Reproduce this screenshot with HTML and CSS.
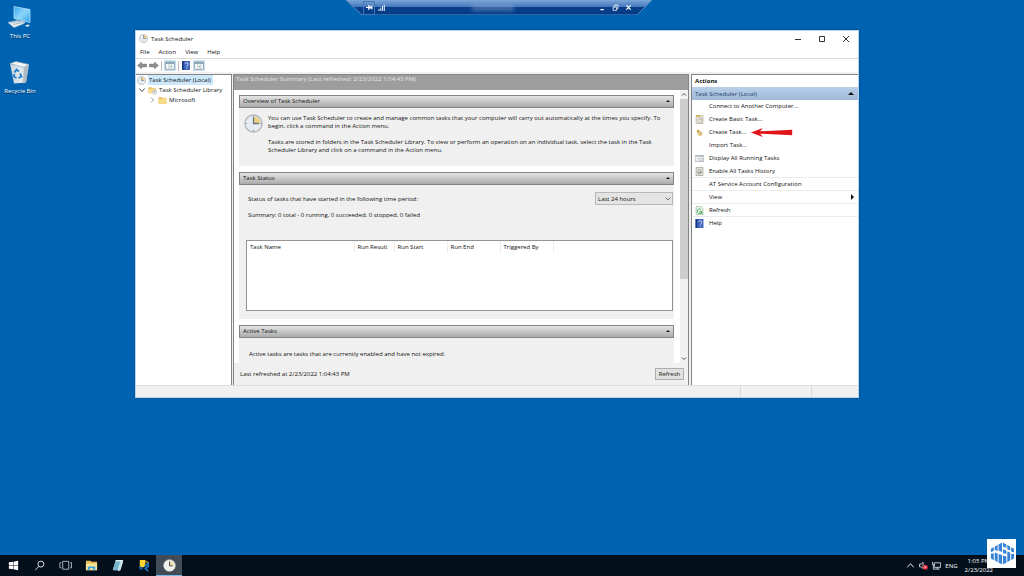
FILE: index.html
```html
<!DOCTYPE html>
<html lang="en">
<head>
<meta charset="utf-8">
<title>Task Scheduler</title>
<link rel="stylesheet" href="styles.css">
</head>
<body>
<svg class="defs" aria-hidden="true">
  <defs>
    <linearGradient id="screen" x1="0" y1="0" x2="1" y2="1"><stop offset="0" stop-color="#37a5ec"/><stop offset=".5" stop-color="#8dd7fb"/><stop offset="1" stop-color="#2f9fe8"/></linearGradient>
    <linearGradient id="bin" x1="0" y1="0" x2="1" y2="0"><stop offset="0" stop-color="#c7d3dc"/><stop offset=".6" stop-color="#e6edf2"/><stop offset="1" stop-color="#9fb0bd"/></linearGradient>
    <linearGradient id="rdp" x1="0" y1="0" x2="0" y2="1"><stop offset="0" stop-color="#7ba6d8"/><stop offset=".45" stop-color="#4678ba"/><stop offset=".5" stop-color="#083f8c"/><stop offset="1" stop-color="#053a84"/></linearGradient>
    <symbol id="clock" viewBox="0 0 20 20">
      <circle cx="10" cy="10" r="9" fill="#e6ecf4" stroke="#b3b7bb" stroke-width="1.500"/>
      <path d="M10 10V2.600A7.400 7.400 0 0 1 17.400 10z" fill="#ecd083"/>
      <path d="M10 3.500V10H15.500" fill="none" stroke="#6d7480" stroke-width="1.400"/>
      <path d="M10 1.800v1.500M10 16.700v1.500M1.800 10h1.500M16.700 10h1.500" stroke="#7f93ad" stroke-width="1"/>
    </symbol>
    <symbol id="taskclock" viewBox="0 0 20 20">
      <circle cx="10" cy="10" r="9" fill="#f1f1ef" stroke="#c8c8c8"/>
      <path d="M10 10V2.600A7.400 7.400 0 0 1 17.400 10z" fill="#f0dfb4"/>
      <path d="M10 4V10.500H15" fill="none" stroke="#444" stroke-width="1.500"/>
    </symbol>
    <symbol id="folder" viewBox="0 0 16 14"><path d="M1 1h6l1.500 2H15v10H1z" fill="#e3b94e"/><path d="M2.500 4H15v9H1z" fill="#f8dc8a"/></symbol>
    <symbol id="help" viewBox="0 0 14 16"><path d="M0 0h14v16H0z" fill="#3f63bb"/><path d="M0 0h3v16H0z" fill="#183a85"/><path d="M5.800 5.500C5.800 2 11.500 2.300 11 5.800C10.700 7.600 8.500 7.500 8.500 10M8.500 11.800v1.800" stroke="#e8efff" stroke-width="1.600" fill="none"/></symbol>
    <symbol id="pane" viewBox="0 0 18 16"><path d="M1 2h16v13H1z" fill="#f7f9fa" stroke="#7d8f9d" stroke-width="1.300"/><path d="M1 2h16v3H1z" fill="#8199aa"/><path d="M7 5v10M12 5v10" stroke="#a3afb7"/><path d="M10.500 8v4L8.500 10z" fill="#3fa055"/></symbol>
    <symbol id="arrow" viewBox="0 0 18 14"><path d="M1 7 8 1v3.500h9v5H8V13z" fill="#929292" stroke="#6b6b6b" stroke-width="1"/></symbol>
  </defs>
</svg>

<div class="desktop">
  <main class="wallpaper">
    <nav class="shortcuts" aria-label="Desktop">
      <a class="shortcut" href="#pc">
        <svg viewBox="0 0 26 24"><path d="M7 1 23 4v13L7 13z" fill="url(#screen)" stroke="#bfe7fb" stroke-width=".7"/><path d="m13 15 5 1v2l-5-1z" fill="#bccdd8"/><path d="m1 17 10-2 6 3-10 4z" fill="#e8eef2" stroke="#b3c8d7" stroke-width=".6"/><path d="m4 17.500 9-1.500M6 19l9-1.800" stroke="#8ba0af" stroke-width=".6"/><path d="m18 20 3-1 2 1-3 1.500z" fill="#e8eef2"/></svg>
        <span>This PC</span>
      </a>
      <a class="shortcut" href="#bin">
        <svg viewBox="0 0 26 24"><path d="M3 3 22 4 19 22 7 23z" fill="url(#bin)"/><path d="m3 3 6-2 13 3-5 3z" fill="#f4f7f9" stroke="#8fa3b2" stroke-width=".7"/><path d="m17 7 5-3-3 18-3 1z" fill="#aebcc8"/><path d="m7.500 12 2-3 2.500 2M13 13l1.500 3-3 1.500M9.500 17.500 6.800 16l.6-2.500" fill="none" stroke="#187bd0" stroke-width="1.700"/></svg>
        <span>Recycle Bin</span>
      </a>
    </nav>

    <header class="remote">
      <svg class="remote-shape" viewBox="0 0 306 15" preserveAspectRatio="none"><path d="M0 0H306L291 15H16z" fill="url(#rdp)"/><path d="M0 0 16 15H291L306 0" fill="none" stroke="#5a8bc5" stroke-width="1"/></svg>
      <div class="remote-row">
        <button class="pin" aria-label="Pin"><svg viewBox="0 0 10 10"><path d="M0 5h4M4 1.500v7M4 5h5M8.500 2v6" stroke="#fff" stroke-width="1.500" fill="none"/><path d="M4 3.500h4v3H4z" fill="#fff"/></svg></button>
        <button aria-label="Signal"><svg viewBox="0 0 10 10"><path d="M1.500 10V7M4 10V5M6.500 10V3M9 10V1" stroke="#dce9f8" stroke-width="1.500"/></svg></button>
        <i class="address"></i>
        <button aria-label="Minimize"><svg viewBox="0 0 10 10"><path d="M2 8h5" stroke="#fff" stroke-width="1.800"/></svg></button>
        <button aria-label="Restore"><svg viewBox="0 0 10 10"><path d="M1.500 4.500h5v4.500h-5zM3.500 4V1.500h5V7H7" stroke="#fff" stroke-width="1.100" fill="none"/></svg></button>
        <button aria-label="Close"><svg viewBox="0 0 10 10"><path d="m2 2 6 6M8 2 2 8" stroke="#fff" stroke-width="1.800"/></svg></button>
      </div>
    </header>

    <section class="window">
      <header class="titlebar">
        <svg class="icon10"><use href="#clock"/></svg>
        <h1>Task Scheduler</h1>
        <div class="controls">
          <button aria-label="Minimize"><svg viewBox="0 0 8 8"><path d="M1 4.500h6" /></svg></button>
          <button aria-label="Maximize"><svg viewBox="0 0 8 8"><path d="M1.500 1.500h5v5h-5z"/></svg></button>
          <button aria-label="Close"><svg viewBox="0 0 8 8"><path d="m1 1 6 6M7 1 1 7"/></svg></button>
        </div>
      </header>
      <nav class="menubar"><button>File</button><button>Action</button><button>View</button><button>Help</button></nav>
      <div class="toolbar">
        <button aria-label="Back"><svg><use href="#arrow"/></svg></button>
        <button aria-label="Forward"><svg class="flip"><use href="#arrow"/></svg></button>
        <i class="sep"></i>
        <button class="on" aria-label="Show console tree"><svg><use href="#pane"/></svg></button>
        <i class="sep"></i>
        <button aria-label="Help"><svg><use href="#help"/></svg></button>
        <button class="on" aria-label="Show action pane"><svg><use href="#pane"/></svg></button>
      </div>

      <div class="panes">
        <ul class="tree">
          <li class="root"><svg class="icon10"><use href="#clock"/></svg><span class="selected">Task Scheduler (Local)</span></li>
          <li class="branch"><svg class="chev" viewBox="0 0 8 8"><path d="m1.500 2.500 2.500 3 2.500-3"/></svg><svg class="icon10" viewBox="0 0 20 18"><path d="M1 2h7l2 2h7v11H1z" fill="#e3b94e"/><path d="M2.500 5H17v10H1z" fill="#f8dc8a"/><circle cx="14.500" cy="12.500" r="4.500" fill="#f2f4f6" stroke="#92979d"/><path d="M14.500 9.500v3h2.500" fill="none" stroke="#555"/></svg><span>Task Scheduler Library</span></li>
          <li class="leaf"><svg class="chev light" viewBox="0 0 8 8"><path d="m3 1.500 2.500 2.500L3 6.500"/></svg><svg class="icon10"><use href="#folder"/></svg><span>Microsoft</span></li>
        </ul>

        <section class="summary">
          <h2>Task Scheduler Summary (Last refreshed: 2/23/2022 1:04:43 PM)</h2>
          <div class="scroller">
            <div class="content">
              <section class="group">
                <header><h3>Overview of Task Scheduler</h3><button aria-label="Collapse overview"><i class="up"></i></button></header>
                <div class="overview">
                  <svg><use href="#clock"/></svg>
                  <div>
                    <p>You can use Task Scheduler to create and manage common tasks that your computer will carry out automatically at the times you specify. To<br>begin, click a command in the Action menu.</p>
                    <p>Tasks are stored in folders in the Task Scheduler Library. To view or perform an operation on an individual task, select the task in the Task<br>Scheduler Library and click on a command in the Action menu.</p>
                  </div>
                </div>
              </section>
              <section class="group">
                <header><h3>Task Status</h3><button aria-label="Collapse status"><i class="up"></i></button></header>
                <div class="status">
                  <div class="period">
                    <label for="period">Status of tasks that have started in the following time period:</label>
                    <div class="picker"><select id="period"><option>Last 24 hours</option></select><svg class="chev" viewBox="0 0 8 8"><path d="m1.500 2.500 2.500 2.500 2.500-2.500"/></svg></div>
                  </div>
                  <p>Summary: 0 total - 0 running, 0 succeeded, 0 stopped, 0 failed</p>
                  <div class="runs">
                    <table>
                      <thead><tr><th class="c-name">Task Name</th><th class="c-result">Run Result</th><th class="c-date">Run Start</th><th class="c-date">Run End</th><th class="c-date">Triggered By</th><td></td></tr></thead>
                    </table>
                  </div>
                </div>
              </section>
              <section class="group">
                <header><h3>Active Tasks</h3><button aria-label="Collapse active tasks"><i class="up"></i></button></header>
                <div class="active"><p>Active tasks are tasks that are currently enabled and have not expired.</p></div>
              </section>
            </div>
            <div class="scrollbar">
              <svg class="chev" viewBox="0 0 8 8"><path d="m2 5.500 2-2 2 2"/></svg>
              <i class="thumb"></i>
              <svg class="chev" viewBox="0 0 8 8"><path d="m2 2.500 2 2 2-2"/></svg>
            </div>
          </div>
          <footer><span>Last refreshed at 2/23/2022 1:04:43 PM</span><button class="push">Refresh</button></footer>
        </section>

        <aside class="actions">
          <h2>Actions</h2>
          <header><h3>Task Scheduler (Local)</h3><i class="up big"></i></header>
          <ul>
            <li><button><i></i>Connect to Another Computer...</button></li>
            <li><button><svg viewBox="0 0 16 16"><path d="M2 1h12v14H2z" fill="#faf4df" stroke="#9b8f70"/><path d="M2 2h7" stroke="#d6a232" stroke-width="2"/><circle cx="9" cy="9" r="4.500" fill="#eef1f4" stroke="#8b8f94"/><path d="M9 6v3h3" fill="none" stroke="#a87925"/></svg>Create Basic Task...</button></li>
            <li class="target"><button><svg viewBox="0 0 16 16"><path d="m3 4 4-1 1 4-3 2z" fill="#d69b26"/><circle cx="9" cy="10" r="3.500" fill="#f4dfa0" stroke="#c9973a"/><path d="M9 8v2h2" fill="none" stroke="#77603a"/></svg>Create Task...</button><svg class="pointer" viewBox="0 0 46 12"><path d="M0 6 13 1 10 4.700 45 3V9L10 7.300 13 11z" fill="#e0161b"/></svg></li>
            <li><button><i></i>Import Task...</button></li>
            <li><button><svg viewBox="0 0 16 16"><path d="M.5 2.500h15v11H.5z" fill="#fff" stroke="#8c969d"/><path d="M1 4h14" stroke="#a8b1b8" stroke-width="2"/><circle cx="11" cy="10" r="3" fill="#e8edf0" stroke="#8c969d"/><path d="M3 8h4M3 11h3" stroke="#9aa5ad"/></svg>Display All Running Tasks</button></li>
            <li class="line"><button><svg viewBox="0 0 16 16"><path d="M2 1h12v14H2z" fill="#eceee5" stroke="#7b7d76"/><path d="M4 3h8v4H4z" fill="#c7cbb9"/><path d="m5 10 3 3 3-4M4 9h8" fill="none" stroke="#4e5c46" stroke-width="1.300"/></svg>Enable All Tasks History</button></li>
            <li class="line"><button><i></i>AT Service Account Configuration</button></li>
            <li class="line"><button><i></i>View<b class="more"></b></button></li>
            <li class="line"><button><svg viewBox="0 0 16 16"><path d="M2 1h9l3 3v11H2z" fill="#f4faf3" stroke="#7aa77a"/><path d="M11 6.500A4 4 0 1 0 12 10M8 10h4v4" fill="none" stroke="#2c9a45" stroke-width="1.500"/></svg>Refresh</button></li>
            <li><button><svg><use href="#help"/></svg>Help</button></li>
          </ul>
        </aside>
      </div>
      <footer class="statusbar"><i></i><i></i><i></i></footer>
    </section>
  </main>

  <footer class="taskbar">
    <button aria-label="Start"><svg viewBox="0 0 14 14"><path d="M2 3.500 6.500 3v3.600H2zM7 2.900 12 2v4.600H7zM2 7.200h4.500V11L2 10.400zM7 7.200h5V12l-5-.9z" fill="#fff"/></svg></button>
    <button aria-label="Search"><svg viewBox="0 0 14 14"><circle cx="8.500" cy="5.500" r="3.200" fill="none" stroke="#e6eaee"/><path d="m6.200 8-3.700 4" stroke="#e6eaee"/></svg></button>
    <button aria-label="Task View"><svg viewBox="0 0 14 14"><path d="M4 2.500h6.500v8.500H4zM2.500 4H1v5.500h1.500M12 4h1.500v5.500H12" fill="none" stroke="#c7d0d6" stroke-width=".9"/></svg></button>
    <button aria-label="File Explorer"><svg viewBox="0 0 14 14"><path d="M1 2h5l1 1h6v9H1z" fill="#e9be54"/><path d="M1 5h12v7H1z" fill="#fbe49c"/><path d="M3 12V8h8v4H9v-2H5v2z" fill="#3da2db"/></svg></button>
    <button aria-label="Notepad"><svg viewBox="0 0 14 14"><path d="M5 2h8l-3 10H2z" fill="#bde1ed"/><path d="m5 2 5 .5L7 12l-5-.5z" fill="#75b6cf"/><path d="M5 1.800h8" stroke="#eef8fb" stroke-width="1.300"/><path d="m12.500 3-3 9-2 .5" fill="none" stroke="#d9e6ea"/></svg></button>
    <button aria-label="Tools"><svg viewBox="0 0 14 14"><path d="M3 1h6v6c-1 3-5 2-6 1z" fill="#ffd632"/><path d="M2 7.500 6 9v3L3 11z" fill="#1b609d"/><path d="m8 8 4-3v3l-3 2 3 3" fill="none" stroke="#2776bc" stroke-width="1.800"/><path d="M9 2l3 2" stroke="#ddb92c" stroke-width="1.200"/></svg></button>
    <button class="running" aria-label="Task Scheduler"><svg><use href="#taskclock"/></svg></button>
    <div class="tray">
      <button aria-label="Hidden icons"><svg viewBox="0 0 10 10"><path d="m1.500 7 3.500-4 3.500 4" fill="none" stroke="#fff"/></svg></button>
      <button aria-label="Volume muted"><svg viewBox="0 0 10 10"><path d="M.5 3.500h2l2-2v7l-2-2h-2z" fill="none" stroke="#eee" stroke-width=".9"/><circle cx="7" cy="7" r="2.800" fill="#e52b3b"/><path d="m6 6 2 2M8 6 6 8" stroke="#fff" stroke-width=".7"/></svg></button>
      <button aria-label="Network"><svg viewBox="0 0 10 10"><path d="M2.500 2h7v5h-7zM6 7v2M3.500 9h5M.5 1v3h2M1.500 4v5h2" fill="none" stroke="#e8edf0" stroke-width=".9"/></svg></button>
      <span>ENG</span>
      <time><span>1:05 PM</span><span>2/23/2022</span></time>
    </div>
    <svg class="brand" viewBox="0 0 30 30"><path d="M0 0h30v30H0z" fill="#fff"/><path d="M4 10l3-1.500v4l-3 1zM4 15h3v7l-3-2zM8 8l3-2v6.500l-3-1zM8 14l3 1v9l-3-2zM12 5.500l3.500-1.500v9.500L12 12zM12 15.500l3.500 1V26L12 24.500zM16.500 4l3.500 1.500V9l-3.500-1zM16.500 10.500 20 12v3.500l-3.500-1zM16.500 17l3.500 1v6.500L16.500 26zM21 6l3 2v4l-3-1.500zM21 13l3 1v8l-3 2zM25 8.500l3 1.500v4l-3-1zM25 15.500h3V20l-3 2z" fill="#3582d8"/></svg>
  </footer>
</div>
</body>
</html>
```
FILE: styles.css
```css
* { box-sizing: border-box; }

body {
  margin: 0;
  font: 6px/8px "Open Sans", "Noto Sans", sans-serif;
  color: #111;
}

h1, h2, h3, p, ul { margin: 0; padding: 0; font: inherit; }
ul { list-style: none; }
button, select { font: inherit; color: inherit; border: 0; padding: 0; margin: 0; background: none; }
i { font-style: normal; }
svg { display: block; flex: none; }
.defs { position: absolute; width: 0; height: 0; }

.desktop { display: flex; flex-direction: column; height: 100vh; background: #0063b1; }
.wallpaper { position: relative; flex: 1; overflow: hidden; }

.shortcuts { display: flex; flex-direction: column; gap: 18px; width: 40px; padding-top: 5px; }
.shortcut { display: flex; flex-direction: column; align-items: center; color: #fff; text-decoration: none; white-space: nowrap; text-shadow: 0 1px 1px #002a55; }
.shortcut svg { width: 26px; height: 25px; }
.shortcut span { line-height: 12px; }

.remote { position: absolute; top: 0; left: 346px; width: 306px; height: 15px; }
.remote-shape { position: absolute; width: 100%; height: 100%; }
.remote-row { position: relative; display: flex; align-items: center; gap: 5px; height: 100%; padding: 0 19px 0 17px; }
.remote-row button { width: 8px; }
.remote-row svg { width: 7px; height: 7px; }
.remote-row .pin { display: grid; place-items: center; width: 12px; height: 14px; border: 1px solid #4478b6; }
.remote-row .pin + button { margin-left: -2px; }
.address { width: 42px; height: 6px; margin: 0 auto; background: #9fb9df; opacity: .4; filter: blur(2px); }

.window { position: absolute; top: 30px; left: 135px; right: 165px; background: #fff; border: 1px solid #b8d4ec; box-shadow: 0 0 3px #004a88; }
.titlebar { display: flex; align-items: center; gap: 3px; height: 15px; padding-left: 3px; }
.icon10 { width: 9px; height: 9px; }
.controls { display: flex; margin-left: auto; }
.controls button { display: grid; place-items: center; width: 24px; height: 15px; }
.controls svg { width: 8px; height: 8px; }
.controls path { fill: none; stroke: #333; stroke-width: 1; }
.menubar { display: flex; gap: 9px; height: 12px; padding-left: 4px; }
.toolbar { display: flex; align-items: center; gap: 2px; height: 14px; padding: 0 1px; border-top: 1px solid #d9d9d9; }
.toolbar svg { width: 10px; height: 9px; }
.flip { transform: scaleX(-1); }
.toolbar .on { padding: 1px; background: #c5e1f3; }
.sep { width: 1px; height: 10px; background: #bcbcbc; }

.panes { display: grid; grid-template-columns: 96px minmax(0, 1fr) 167px; gap: 1px; padding-top: 2px; background: #f0f0f0; }
.tree { display: flex; flex-direction: column; background: #fff; border-right: 1px solid #848484; border-top: 1px solid #848484; }
.tree li { display: flex; align-items: center; height: 10px; gap: 2px; white-space: nowrap; }
.tree .root { padding-left: 1px; }
.tree .branch { padding-left: 2px; }
.tree .leaf { padding-left: 12px; }
.tree .selected { background: #cde8fb; padding: 0 2px 0 1px; line-height: 10px; }
.chev { width: 8px; height: 8px; fill: none; stroke: #555; stroke-width: 1; }
.light { stroke: #999; }

.summary { display: flex; flex-direction: column; margin-right: 1px; border: solid #848484; border-width: 1px 1px 0; }
.summary h2 { height: 15px; padding: 0 2px; background: #9d9d9d; color: #e6e6e6; }
.scroller { display: flex; height: 273px; background: #fff; }
.content { display: flex; flex-direction: column; gap: 6px; flex: 1; min-width: 0; padding: 5px 6px 0 5px; overflow: hidden; }
.group { background: #f0f0f0; }
.group:last-child { flex: 1; }
.group > header { display: flex; justify-content: space-between; align-items: center; height: 13px; padding: 0 3px 1px; border: 1px solid #848484; background: linear-gradient(#e4e4e4, #ababab); }
.up { display: block; border: 2px solid transparent; border-top: 0; border-bottom: 2px solid #111; }
.up.big { border-width: 0 3px 3px; }
.overview { display: flex; gap: 5px; height: 58px; padding: 6px 5px 0; white-space: nowrap; }
.overview svg { width: 19px; height: 19px; }
.overview p { margin-bottom: 8px; }
.status { padding: 7px 1px 8px 7px; }
.period { display: flex; align-items: center; justify-content: space-between; padding-left: 2px; }
.picker { display: grid; grid-template-columns: 1fr; width: 78px; border: 1px solid #b8b8b8; background: #e4e4e4; }
.picker select { grid-area: 1 / 1; appearance: none; height: 11px; padding: 0 2px; width: 100%; }
.picker .chev { grid-area: 1 / 1; justify-self: end; align-self: center; pointer-events: none; stroke: #777; }
.status > p { padding: 6px 2px 21px; }
.runs { height: 71px; border: 1px solid #949494; background: #fff; }
.runs table { width: 100%; border-collapse: collapse; table-layout: fixed; }
.runs th { height: 12px; padding: 0 3px; text-align: left; font-weight: 400; white-space: nowrap; border-right: 1px solid #ececec; }
.c-name { width: 107px; }
.c-result { width: 40px; }
.c-date { width: 53px; }
.active { padding: 12px 10px; }
.scrollbar { display: flex; flex-direction: column; width: 8px; background: #f0f0f0; }
.thumb { height: 180px; margin: 1px 0 auto; background: #cdcdcd; }
.summary footer { display: flex; align-items: center; justify-content: space-between; height: 22px; padding: 0 4px 0 6px; background: #f0f0f0; }
.push { height: 12px; width: 29px; border: 1px solid #adadad; background: #e1e1e1; }

.actions { background: #fff; border: solid #848484; border-width: 1px 0 0 1px; }
.actions h2 { height: 12px; padding: 2px 3px; font-weight: 700; }
.actions header { display: flex; align-items: center; justify-content: space-between; height: 13px; padding: 0 4px 0 3px; background: linear-gradient(#b9cfe9, #9fb9d8); color: #1d3c66; }
.actions .big { border-bottom-color: #111; }
.actions li { position: relative; height: 13px; padding-right: 4px; }
.actions li button { display: flex; align-items: center; gap: 5px; width: 100%; height: 12px; padding-left: 3px; text-align: left; white-space: nowrap; }
.actions li svg, .actions li i { width: 9px; height: 9px; flex: none; }
.actions .line { border-bottom: 1px solid #ececec; }
.actions li .pointer { position: absolute; left: 57px; top: 1px; width: 46px; height: 11px; }
.more { margin-left: auto; border: 3px solid transparent; border-right: 0; border-left: 3px solid #111; }

.statusbar { display: grid; grid-template-columns: 1fr 71px 46px; height: 12px; background: #f0f0f0; border-top: 1px solid #d9dfe8; }
.statusbar i { border-right: 1px solid #d9d9d9; }
.statusbar i:last-child { border: 0; }

.taskbar { position: relative; display: flex; height: 21px; background: #030f1a; color: #fff; }
.taskbar > button { display: grid; place-items: center; width: 26px; }
.taskbar > button svg { width: 13px; height: 13px; }
.taskbar .running { background: #414c57; border-bottom: 1px solid #76b9ed; }
.tray { display: flex; align-items: center; gap: 4px; margin-left: auto; padding-right: 31px; }
.tray svg { width: 9px; height: 9px; }
.tray time { display: flex; flex-direction: column; align-items: center; padding-left: 3px; line-height: 9px; }
.brand { position: absolute; right: 8px; bottom: 8px; width: 29px; height: 29px; }
```
